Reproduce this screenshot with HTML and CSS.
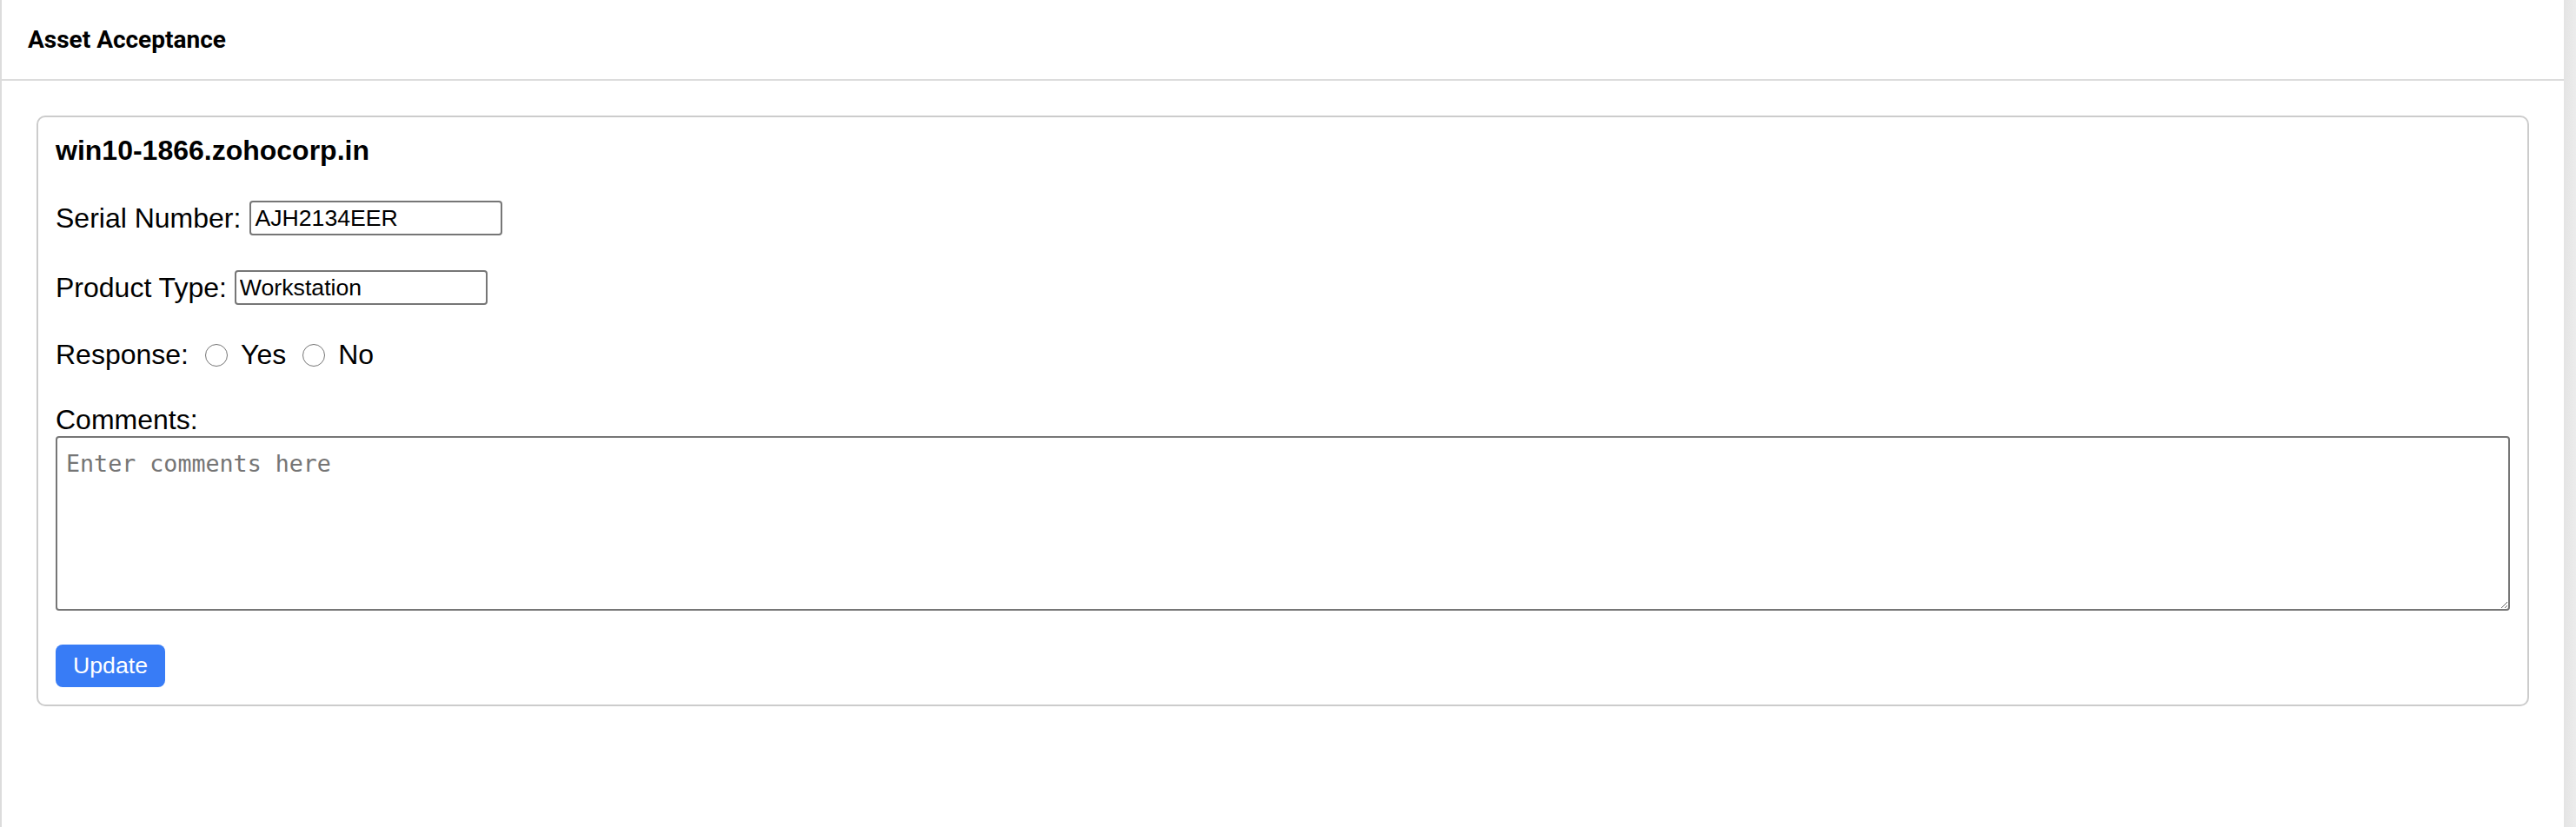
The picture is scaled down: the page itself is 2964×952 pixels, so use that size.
FILE: index.html
```html
<!DOCTYPE html>
<html lang="en">
<head>
<meta charset="utf-8">
<title>Asset Acceptance</title>
<link rel="stylesheet" href="styles.css">
</head>
<body>
<div class="page">
  <div class="app">
    <header class="topbar">
      <span class="topbar-title">Asset Acceptance</span>
    </header>
    <main class="content">
      <section class="card">
        <div class="card-title">win10-1866.zohocorp.in</div>
        <div class="row">
          <label class="label" for="serial">Serial Number:</label>
          <input class="field" id="serial" type="text" value="AJH2134EER">
        </div>
        <div class="row">
          <label class="label" for="ptype">Product Type:</label>
          <input class="field" id="ptype" type="text" value="Workstation">
        </div>
        <div class="row radio-row">
          <span class="label">Response:</span>
          <label class="choice"><input class="radio" type="radio" name="resp" value="yes"><span>Yes</span></label>
          <label class="choice"><input class="radio" type="radio" name="resp" value="no"><span>No</span></label>
        </div>
        <div class="comments">
          <label class="label" for="comments">Comments:</label>
          <textarea class="comments-box" id="comments" placeholder="Enter comments here"></textarea>
        </div>
        <div class="actions">
          <button class="btn" type="button">Update</button>
        </div>
      </section>
    </main>
  </div>
  <div class="scroll-track"></div>
</div>
</body>
</html>
```
FILE: styles.css
```css
* { box-sizing: border-box; }

html, body {
  margin: 0;
  padding: 0;
  background: #fff;
}

body {
  font-family: "Liberation Sans", Arial, sans-serif;
  color: #000;
}

.page {
  display: flex;
  width: 2964px;
  height: 952px;
}

.app {
  flex: 1;
  border-left: 2px solid #dcdcdc;
  display: flex;
  flex-direction: column;
}

.scroll-track {
  width: 14px;
  background: linear-gradient(to right, #e4e4e4, #ececec);
}

.topbar {
  height: 93px;
  border-bottom: 2px solid #dcdcdc;
  display: flex;
  align-items: center;
  padding: 0 30px;
}

.topbar-title {
  font-family: Roboto, "Liberation Sans", sans-serif;
  font-weight: 700;
  font-size: 28px;
}

.content {
  padding: 40px;
}

.card {
  border: 2px solid #cccccc;
  border-radius: 10px;
  padding: 20px;
  display: flex;
  flex-direction: column;
  gap: 38px;
}

.card-title {
  font-weight: 700;
  font-size: 32px;
  line-height: 37px;
}

.label {
  font-size: 32px;
  line-height: 37px;
}

.row {
  display: flex;
  align-items: center;
  height: 42px;
}

.radio-row {
  height: 37px;
}

.field {
  margin-left: 10px;
  width: 291px;
  height: 40px;
  border: 2px solid #767676;
  border-radius: 4px;
  padding: 2px 4px;
  font-family: "Liberation Sans", Arial, sans-serif;
  font-size: 26.67px;
  color: #000;
  background: #fff;
}

.row + .row .field {
  margin-left: 9px;
}

.choice {
  display: flex;
  align-items: center;
  font-size: 32px;
  line-height: 37px;
}

.radio {
  width: 26px;
  height: 26px;
  margin: 0 15px 0 19px;
}

.comments {
  display: flex;
  flex-direction: column;
}

.comments-box {
  display: block;
  width: 100%;
  height: 201px;
  border: 2px solid #767676;
  border-radius: 4px;
  padding: 12px 10px;
  font-family: "DejaVu Sans Mono", "Liberation Mono", monospace;
  font-size: 26.67px;
  line-height: 36px;
  resize: both;
  background: #fff;
}

.comments-box::placeholder {
  color: #757575;
}

.actions {
  display: flex;
  margin-top: 1px;
}

.btn {
  background: #387cf6;
  color: #fff;
  border: 0;
  border-radius: 8px;
  padding: 9px 20px;
  font-family: "Liberation Sans", Arial, sans-serif;
  font-size: 26.67px;
  line-height: 31px;
  cursor: pointer;
}
```
